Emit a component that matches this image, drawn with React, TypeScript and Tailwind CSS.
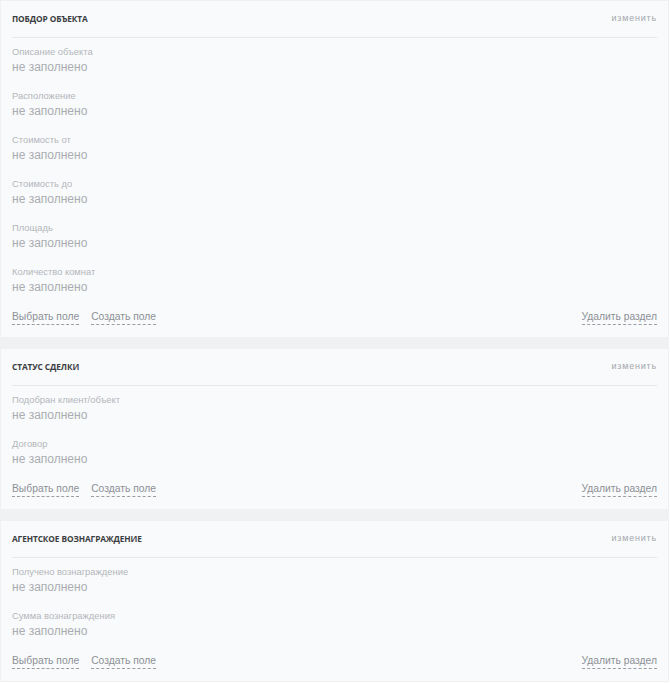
import { FC } from "react";

type section = {
  title: string;
  fields: string[];
};

const sections: section[] = [
  {
    title: "ПОБДОР ОБЪЕКТА",
    fields: [
      "Описание объекта",
      "Расположение",
      "Стоимость от",
      "Стоимость до",
      "Площадь",
      "Количество комнат",
    ],
  },
  {
    title: "СТАТУС СДЕЛКИ",
    fields: ["Подобран клиент/объект", "Договор"],
  },
  {
    title: "АГЕНТСКОЕ ВОЗНАГРАЖДЕНИЕ",
    fields: ["Получено вознаграждение", "Сумма вознаграждения"],
  },
];

const DashedLink: FC<{ text: string }> = ({ text }) => (
  <span className="border-b border-dashed border-[#9a9ea3] text-[10.3px] leading-[15px] text-[#8c9096]">
    {text}
  </span>
);

const Section: FC<{ data: section }> = ({ data }) => (
  <div className="bg-[#f9fafb] px-[11px] pb-3 border-x border-[#eef0f2]">
    <div className="h-[37px] flex items-center justify-between border-b border-[#e6e8eb]">
      <h3 className="text-[8.3px] font-bold tracking-[-0.1px] text-[#3b3e42] font-[family-name:Open_Sans,sans-serif]">
        {data.title}
      </h3>
      <span className="text-[9px] tracking-[0.8px] text-[#a3a7ac]">
        изменить
      </span>
    </div>
    <div className="pt-2 flex flex-col gap-[14px]">
      {data.fields.map((f) => (
        <div key={f}>
          <p className="text-[9.4px] leading-3 text-[#b3b7bc]">{f}</p>
          <p className="text-[12px] leading-[18px] text-[#a9adb2]">
            не заполнено
          </p>
        </div>
      ))}
    </div>
    <div className="mt-[13px] h-4 flex items-start justify-between">
      <div className="flex gap-3">
        <DashedLink text="Выбрать поле" />
        <DashedLink text="Создать поле" />
      </div>
      <DashedLink text="Удалить раздел" />
    </div>
  </div>
);

const App: FC = () => {
  return (
    <div className="w-[670px] h-[684px] bg-white font-[family-name:Liberation_Sans,Arial,sans-serif]">
      <div className="w-[669px] flex flex-col gap-3 bg-[#eff1f3] border-t border-b border-[#eef0f2]">
        {sections.map((s) => (
          <Section key={s.title} data={s} />
        ))}
      </div>
    </div>
  );
};

export default App;
